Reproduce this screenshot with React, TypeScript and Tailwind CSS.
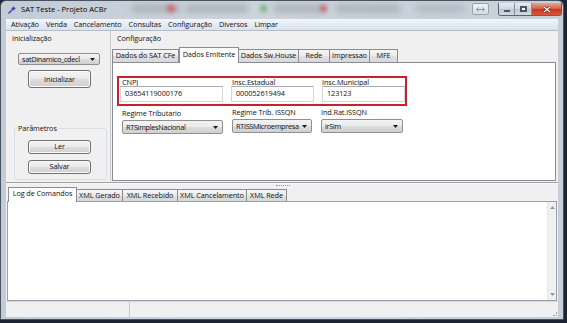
import React from 'react';

const btnBg = 'bg-[linear-gradient(#f3f3f3,#ebebeb_46%,#dddddd_52%,#d0d0d0)]';
const tabBg = 'bg-[linear-gradient(#f5f5f5,#ebebeb_50%,#e0e0e0_52%,#d8d8d8)]';

function DropArrow() {
  return (
    <svg width="5" height="3" viewBox="0 0 5 3" className="shrink-0">
      <polygon points="0,0 5,0 2.5,3" fill="#1a1a1a" />
    </svg>
  );
}

function WinButton({ label, className }: { label: string; className: string }) {
  return (
    <div
      className={`flex items-center justify-center rounded-[3px] border border-[#707070] ${btnBg} shadow-[inset_0_0_0_1px_#fbfbfb] ${className}`}
    >
      {label}
    </div>
  );
}

function Combo({ value, className }: { value: string; className: string }) {
  return (
    <div
      className={`flex items-center justify-between gap-[1px] rounded-[2px] border border-[#8e8f8f] ${btnBg} pl-[3px] pr-[4px] ${className}`}
    >
      <span className="whitespace-nowrap tracking-[-0.3px]">{value}</span>
      <DropArrow />
    </div>
  );
}

function Edit({ value, className }: { value: string; className: string }) {
  return (
    <div
      className={`flex h-[16px] items-center border border-[#d3d7dc] border-t-[#abadb3] bg-white pl-[4px] ${className}`}
    >
      {value}
    </div>
  );
}

function Tab({ label, active, className }: { label: string; active?: boolean; className: string }) {
  if (active) {
    return (
      <div
        className={`relative z-10 -mb-px flex h-[16px] items-center justify-center whitespace-nowrap border border-b-0 border-[#898c95] bg-white pb-[2px] ${className}`}
      >
        {label}
      </div>
    );
  }
  return (
    <div
      className={`flex h-[13px] items-center justify-center whitespace-nowrap border border-b-0 border-l-0 border-[#898c95] ${tabBg} first:border-l ${className}`}
    >
      {label}
    </div>
  );
}

function AppIcon() {
  return (
    <svg width="8" height="8" viewBox="0 0 8 8">
      <path d="M0.5 7.5 L4.5 3.5" stroke="#3b5bd6" strokeWidth="1.6" />
      <rect x="4" y="1" width="3" height="3" fill="#4a3aa8" transform="rotate(45 5.5 2.5)" />
      <path d="M6 0.5 L7.5 2" stroke="#9a9ee8" strokeWidth="0.8" />
    </svg>
  );
}

function CaptionButtons() {
  return (
    <div className="flex h-[13px] items-start gap-[9px]">
      <div className="flex h-[12px] w-[17px] items-center justify-center rounded-[2px] border border-[#9aa3ad] bg-[linear-gradient(#eef1f4,#d6dce3)]">
        <svg width="9" height="5" viewBox="0 0 9 5">
          <path d="M0.5 2.5 H8.5 M0.5 2.5 L2.5 0.5 M0.5 2.5 L2.5 4.5 M8.5 2.5 L6.5 0.5 M8.5 2.5 L6.5 4.5" stroke="#8a939c" strokeWidth="1" fill="none" />
        </svg>
      </div>
      <div className="flex h-[13px] overflow-hidden rounded-b-[3px] border border-t-0 border-[#59636e]">
        <div className="flex w-[16px] items-center justify-center border-r border-[#8892a0] bg-[linear-gradient(#e9edf2,#cdd5df_50%,#bcc6d3_52%,#d2dae4)]">
          <div className="mt-[4px] h-[2px] w-[6px] border border-[#4d5663] bg-white" />
        </div>
        <div className="flex w-[17px] items-center justify-center border-r border-[#8892a0] bg-[linear-gradient(#e9edf2,#cdd5df_50%,#bcc6d3_52%,#d2dae4)]">
          <div className="h-[6px] w-[7px] border border-[#4d5663] bg-white shadow-[inset_0_0_0_1px_#4d5663]" />
        </div>
        <div className="flex w-[29px] items-center justify-center bg-[linear-gradient(#e8a594,#d6644c_45%,#c43a22_55%,#d9553a)]">
          <svg width="8" height="7" viewBox="0 0 8 7">
            <path d="M1 1 L7 6 M7 1 L1 6" stroke="#5a1c12" strokeWidth="2.4" />
            <path d="M1 1 L7 6 M7 1 L1 6" stroke="#ffffff" strokeWidth="1.3" />
          </svg>
        </div>
      </div>
    </div>
  );
}

export default function App() {
  const menu = ['Ativação', 'Venda', 'Cancelamento', 'Consultas', 'Configuração', 'Diversos', 'Limpar'];

  return (
    <div className="h-[323px] w-[567px] overflow-hidden bg-[#1d2532] font-['Open_Sans',sans-serif] text-[7.3px] leading-none tracking-[-0.1px] text-[#111]">
      <div className="flex h-[320px] w-[564px] flex-col rounded-t-[6px] border border-[#465260] bg-[linear-gradient(90deg,#c3ccd5,#ccd4dc_40%,#c7d0d9)]">
        {/* title bar */}
        <div className="relative flex h-[18px] items-start overflow-hidden">
          <div className="absolute left-[130px] top-[3px] h-[9px] w-[50px] rounded-full bg-[#aeb5bd] blur-[3px]" />
          <div className="absolute left-[166px] top-[4px] h-[7px] w-[8px] rounded-full bg-[#d2626a] blur-[2px]" />
          <div className="absolute left-[184px] top-[3px] h-[9px] w-[64px] rounded-full bg-[#aeb5bd] blur-[3px]" />
          <div className="absolute left-[259px] top-[4px] h-[7px] w-[7px] rounded-full bg-[#6ab56e] blur-[2px]" />
          <div className="absolute left-[272px] top-[3px] h-[9px] w-[52px] rounded-full bg-[#aeb5bd] blur-[3px]" />
          <div className="absolute left-[319px] top-[4px] h-[7px] w-[7px] rounded-full bg-[#c8666a] blur-[2px]" />
          <div className="absolute left-[334px] top-[3px] h-[9px] w-[66px] rounded-full bg-[#aeb5bd] blur-[3px]" />
          <div className="absolute left-[414px] top-[3px] h-[9px] w-[50px] rounded-full bg-[#b4bbc3] blur-[3px]" />
          <div className="relative flex items-center gap-[5px] pl-[7px] pt-[5px]">
            <AppIcon />
            <span className="text-[7.6px] tracking-normal text-black">SAT Teste - Projeto ACBr</span>
          </div>
          <div className="relative ml-auto pr-[1px] pt-[2px]">
            <CaptionButtons />
          </div>
        </div>

        {/* frame + client */}
        <div className="flex flex-1 px-[5px] pb-[2px]">
          <div className="flex flex-1 flex-col bg-[#f0f0f0]">
            {/* menu */}
            <div className="flex h-[12px] items-center gap-[7px] border-b border-[#b6bcc6] bg-[linear-gradient(#f3f6fb,#e4ebf5_50%,#d9e3f1)] pl-[5px]">
              {menu.map((m) => (
                <span key={m}>{m}</span>
              ))}
            </div>

            {/* upper area */}
            <div className="flex h-[150px]">
              {/* Inicialização */}
              <div className="flex w-[104px] flex-col">
                <span className="ml-[6px] mt-[4px]">Inicialização</span>
                <Combo value="satDinamico_cdecl" className="ml-[12px] mt-[11px] h-[12px] w-[82px]" />
                <WinButton label="Inicializar" className="ml-[22px] mt-[5px] h-[18px] w-[63px]" />
                <div className="ml-[8px] mt-[40px] flex h-[52px] w-[93px] flex-col rounded-[3px] border border-[#d5dfe5]">
                  <span className="-mt-[4px] ml-[2px] self-start bg-[#f0f0f0] px-[1px]">Parâmetros</span>
                  <WinButton label="Ler" className="ml-[13px] mt-[7px] h-[14px] w-[63px]" />
                  <WinButton label="Salvar" className="ml-[13px] mt-[6px] h-[14px] w-[63px]" />
                </div>
              </div>

              {/* Configuração */}
              <div className="flex flex-1 flex-col border-l border-[#c9cdd2]">
                <span className="ml-[6px] mt-[4px]">Configuração</span>
                <div className="ml-[1px] mt-[4px] flex h-[16px] items-end">
                  <Tab label="Dados do SAT CFe" className="w-[67px]" />
                  <Tab label="Dados Emitente" active className="w-[60px]" />
                  <Tab label="Dados Sw.House" className="w-[60px]" />
                  <Tab label="Rede" className="w-[31px]" />
                  <Tab label="Impressao" className="w-[40px]" />
                  <Tab label="MFE" className="w-[28px]" />
                </div>
                <div className="ml-[1px] mr-[2px] flex h-[120px] flex-col border border-[#898c95] bg-white">
                  <div className="ml-[4px] mt-[13px] flex h-[30px] w-[290px] gap-[8px] border-2 border-[#c8202c] pl-[1px]">
                    <div className="flex w-[103px] flex-col">
                      <span className="h-[8px] pl-[2px] pt-[1px]">CNPJ</span>
                      <Edit value="03654119000176" className="w-[103px]" />
                    </div>
                    <div className="flex w-[83px] flex-col">
                      <span className="h-[8px] pl-[1px] pt-[1px]">Insc.Estadual</span>
                      <Edit value="000052619494" className="w-[83px]" />
                    </div>
                    <div className="flex w-[83px] flex-col">
                      <span className="h-[8px] pt-[1px]">Insc.Municipal</span>
                      <Edit value="123123" className="w-[83px]" />
                    </div>
                  </div>
                  <div className="ml-[9px] mt-[3px] flex gap-[9px]">
                    <div className="flex w-[101px] flex-col gap-[3px]">
                      <span className="pt-[1px]">Regime Tributario</span>
                      <Combo value="RTSimplesNacional" className="h-[14px] w-[101px]" />
                    </div>
                    <div className="flex w-[80px] flex-col gap-[3px]">
                      <span>Regime Trib. ISSQN</span>
                      <Combo value="RTISSMicroempresa" className="h-[14px] w-[80px]" />
                    </div>
                    <div className="flex w-[82px] flex-col gap-[3px]">
                      <span>Ind.Rat.ISSQN</span>
                      <Combo value="irSim" className="h-[14px] w-[82px]" />
                    </div>
                  </div>
                </div>
              </div>
            </div>

            {/* splitter */}
            <div className="flex h-[6px] flex-col">
              <div className="mt-[1px] h-[2px] border-t border-[#a3a3a3] bg-[#f7f7f7]" />
              <div className="ml-[270px] mt-[1px] h-px w-[14px] border-t border-dotted border-[#9a9a9a]" />
            </div>

            {/* lower tabs */}
            <div className="ml-[2px] flex h-[14px] items-end">
              <Tab label="Log de Comandos" active className="w-[69px] !h-[15px]" />
              <Tab label="XML Gerado" className="w-[46px] !h-[12px]" />
              <Tab label="XML Recebido" className="w-[55px] !h-[12px]" />
              <Tab label="XML Cancelamento" className="w-[69px] !h-[12px]" />
              <Tab label="XML Rede" className="w-[40px] !h-[12px]" />
            </div>

            {/* memo */}
            <div className="mx-[1px] flex h-[100px] border border-[#9aa0a8] bg-white">
              <div className="flex-1" />
              <div className="flex w-[9px] flex-col items-center justify-between border-l border-[#e6e6e6] bg-[#f0f0f0] py-[4px]">
                <svg width="5" height="3" viewBox="0 0 5 3">
                  <polygon points="2.5,0 5,3 0,3" fill="#9a9a9a" />
                </svg>
                <svg width="5" height="3" viewBox="0 0 5 3">
                  <polygon points="0,0 5,0 2.5,3" fill="#9a9a9a" />
                </svg>
              </div>
            </div>

            {/* status bar */}
            <div className="flex flex-1 border-t border-[#d7d7d7]">
              <div className="w-[124px] border-r border-[#c8c8c8]" />
              <div className="flex flex-1 items-end justify-end pb-[1px] pr-[1px]">
                <div className="h-[4px] w-[4px] border-b border-r border-dotted border-[#a0a0a0]" />
              </div>
            </div>
          </div>
        </div>
      </div>
    </div>
  );
}
